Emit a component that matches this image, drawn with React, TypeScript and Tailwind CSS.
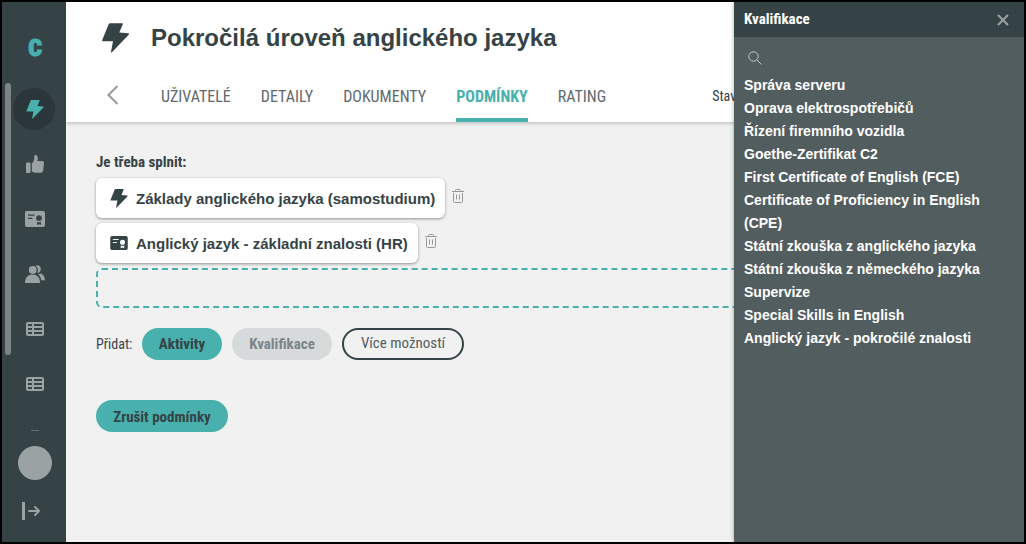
import type { ReactNode } from "react";

const condensed = "font-['Roboto_Condensed','Liberation_Sans_Narrow',Roboto,sans-serif]";

function BoltIcon({ className }: { className: string }) {
  return (
    <svg viewBox="0 0 81 89" className={className} fill="currentColor" aria-hidden="true">
      <path d="M25 0H60Q64 0 62 4L52 28L78 30Q83 31 80 35L30 87Q27 90 27 86L33 54H3Q-1 54 1 50L20 3Q21 0 25 0Z" />
    </svg>
  );
}

function ThumbIcon() {
  return (
    <svg viewBox="0 0 18 18" className="size-[18px]" fill="currentColor" aria-hidden="true">
      <path d="M1 7.500H3.500Q4.500 7.500 4.500 8.500V17Q4.500 18 3.500 18H1Q0 18 0 17V8.500Q0 7.500 1 7.500Z" />
      <path d="M5.800 8.500C7.500 7 8.300 5 8.300 3V1.200Q8.500 0 9.500 0C11 0 11.800 1.500 11.800 3.200C11.800 4.300 11.500 5.200 11.200 6H16.200Q18 6.200 18 8L17.200 15.500Q16.800 17.500 15 17.700H9.500Q7.500 17.500 5.800 16.500Z" />
    </svg>
  );
}

function CertificateIcon({ className }: { className: string }) {
  return (
    <svg viewBox="0 0 20 16" className={className} aria-hidden="true">
      <path
        fill="currentColor"
        fillRule="evenodd"
        d="M2 0H18A2 2 0 0 1 20 2V14A2 2 0 0 1 18 16H2A2 2 0 0 1 0 14V2A2 2 0 0 1 2 0ZM3 3.500V4.700H9.500V3.500ZM3 6.800V8H7.500V6.800ZM14 4.200A2.900 2.900 0 1 0 14 10A2.900 2.900 0 1 0 14 4.200ZM12 10.800V14L14 13.200L16 14V10.800Q14 11.800 12 10.800Z"
      />
    </svg>
  );
}

function UsersIcon() {
  return (
    <svg viewBox="0 0 20 18" className="h-[18px] w-5" fill="currentColor" aria-hidden="true">
      <circle cx="7.700" cy="4.900" r="3.900" />
      <path d="M0 18C0 12.500 3 9.600 7.500 9.600S15 12.500 15 18Z" />
      <path d="M10.500 .8C13 -.8 16 1 15.800 4.200C15.700 6.500 14.200 8 12.300 8.100C13.500 5.600 13 2.600 10.500 .8Z" />
      <path d="M13.200 9.300L15.800 8.500C18.500 9.500 19.800 12 20 15.200H16.200C15.800 12.700 14.800 10.700 13.200 9.300Z" />
    </svg>
  );
}

function TableIcon() {
  return (
    <svg viewBox="0 0 18 14" className="h-[14px] w-[18px]" aria-hidden="true">
      <path
        fill="currentColor"
        fillRule="evenodd"
        d="M2 0H16A2 2 0 0 1 18 2V12A2 2 0 0 1 16 14H2A2 2 0 0 1 0 12V2A2 2 0 0 1 2 0ZM2 2V4H6V2ZM8 2V4H16V2ZM2 6V8H6V6ZM8 6V8H16V6ZM2 10V12H6V10ZM8 10V12H16V10Z"
      />
    </svg>
  );
}

function TrashIcon() {
  return (
    <svg viewBox="0 0 12 14" className="h-[14px] w-3" fill="none" stroke="currentColor" aria-hidden="true">
      <path d="M0 2.500H12M3.500 2.500V1.500Q3.500 .5 4.500 .5H7.500Q8.500 .5 8.500 1.500V2.500M1.500 4V12.500Q1.500 13.500 2.500 13.500H9.500Q10.500 13.500 10.500 12.500V4M4.500 5.500V10.500M7.500 5.500V10.500" />
    </svg>
  );
}

function NavButton({ label, active, children }: { label: string; active?: boolean; children: ReactNode }) {
  return (
    <button
      type="button"
      aria-label={label}
      className={
        active
          ? "flex h-[42px] w-[42px] shrink-0 items-center justify-center rounded-full bg-[#2b363a] pl-px text-[#48b0ad]"
          : "flex h-[42px] w-[42px] shrink-0 items-center justify-center rounded-full pl-0.5 text-[#9ba2a4]"
      }
    >
      {children}
    </button>
  );
}

function Sidebar() {
  return (
    <aside className="flex w-16 shrink-0 flex-col bg-[#364346]">
      <a
        href="#"
        className="flex h-[81px] items-center justify-center pt-2.5 pl-0.5 font-['Roboto_Condensed',Roboto,sans-serif] text-2xl leading-6 font-black text-[#48b0ad] [-webkit-text-stroke:1px_#48b0ad]"
      >
        C
      </a>
      <div className="flex gap-0.5 pl-[3px]">
        <div className="h-[272px] w-1.5 rounded-full bg-[#7d8385]" />
        <nav className="flex h-[352px] flex-col gap-[13px] overflow-hidden pt-[5px]">
          <NavButton label="Aktivity" active>
            <BoltIcon className="h-[19px] w-[18px]" />
          </NavButton>
          <NavButton label="Hodnocení">
            <ThumbIcon />
          </NavButton>
          <NavButton label="Kvalifikace">
            <CertificateIcon className="h-4 w-5" />
          </NavButton>
          <NavButton label="Uživatelé">
            <UsersIcon />
          </NavButton>
          <NavButton label="Přehled">
            <TableIcon />
          </NavButton>
          <NavButton label="Tabulka">
            <TableIcon />
          </NavButton>
          <span className="mt-3 ml-[18px] h-px w-2 shrink-0 bg-[#66706f]" />
        </nav>
      </div>
      <div className="flex flex-col items-center gap-[22px] pt-[11px] pb-[21px] text-[#9ba2a4]">
        <button type="button" aria-label="Profil" className="ml-0.5 size-[34px] rounded-full bg-[#9ba2a4]" />
        <button type="button" aria-label="Odhlásit" className="mr-1.5">
          <svg viewBox="0 0 18 18" className="size-[18px]" fill="none" stroke="currentColor" aria-hidden="true">
            <path strokeWidth="3" d="M1.500 0V18" />
            <path strokeWidth="2" strokeLinecap="round" strokeLinejoin="round" d="M7 9H17M13 5L17 9L13 13" />
          </svg>
        </button>
      </div>
    </aside>
  );
}

const tabs = [
  { label: "UŽIVATELÉ" },
  { label: "DETAILY" },
  { label: "DOKUMENTY" },
  { label: "PODMÍNKY", active: true },
  { label: "RATING" },
];

function Header() {
  return (
    <header className="flex h-[120px] flex-col justify-between bg-white pl-9 shadow-[0_1px_4px_rgba(0,0,0,0.25)]">
      <div className="flex items-center gap-[22px] pt-5 text-[#364346]">
        <BoltIcon className="h-[30px] w-[27px]" />
        <h1 className="text-2xl leading-8 font-bold">Pokročilá úroveň anglického jazyka</h1>
      </div>
      <div className="flex h-[51px] items-stretch">
        <a href="#" aria-label="Zpět" className="flex w-[59px] pt-3.5 pl-[5px] text-[#999]">
          <svg viewBox="0 0 12 20" className="h-5 w-3" fill="none" stroke="currentColor" strokeWidth="2" aria-hidden="true">
            <path d="M10.500 1L1.500 10L10.500 19" />
          </svg>
        </a>
        <nav className={`flex gap-[30px] text-base leading-[51px] text-[#5f696d] ${condensed}`}>
          {tabs.map((tab) => (
            <a
              key={tab.label}
              href="#"
              className={tab.active ? "border-b-4 border-[#48b0ad] font-bold text-[#48b0ad]" : ""}
            >
              {tab.label}
            </a>
          ))}
        </nav>
        <span className={`ml-[106px] text-sm leading-[51px] text-[#364346] ${condensed}`}>Stav</span>
      </div>
    </header>
  );
}

function Condition({ icon, children }: { icon: ReactNode; children: ReactNode }) {
  return (
    <li className="flex">
      <div className="flex h-10 items-center gap-2 rounded-md bg-white pr-2.5 pl-3.5 text-[15px] leading-5 font-bold whitespace-nowrap shadow-[0_1px_3px_rgba(0,0,0,0.4)]">
        {icon}
        <span className="pt-0.5">{children}</span>
      </div>
      <button type="button" aria-label="Odstranit" className="mt-[11px] ml-[7px] self-start text-[#999]">
        <TrashIcon />
      </button>
    </li>
  );
}

const qualifications = [
  "Správa serveru",
  "Oprava elektrospotřebičů",
  "Řízení firemního vozidla",
  "Goethe-Zertifikat C2",
  "First Certificate of English (FCE)",
  "Certificate of Proficiency in English (CPE)",
  "Státní zkouška z anglického jazyka",
  "Státní zkouška z německého jazyka",
  "Supervize",
  "Special Skills in English",
  "Anglický jazyk - pokročilé znalosti",
];

function QualificationPanel() {
  return (
    <aside className="absolute inset-y-0 right-0 w-[290px] bg-[#525d60] text-white shadow-[0_0_4px_rgba(0,0,0,0.35)]">
      <div className="flex h-[35px] items-center justify-between bg-[#364346] pr-[15px] pl-2.5">
        <h2 className={`text-[15px] font-bold ${condensed}`}>Kvalifikace</h2>
        <button type="button" aria-label="Zavřít" className="text-[#9ba2a4]">
          <svg viewBox="0 0 12 12" className="size-3" stroke="currentColor" strokeWidth="2" aria-hidden="true">
            <path d="M1 1L11 11M11 1L1 11" />
          </svg>
        </button>
      </div>
      <label className="flex h-[37px] items-center gap-2 pt-1 pr-3 pl-3.5 text-[#c3c8ca]">
        <svg viewBox="0 0 14 14" className="size-3.5 shrink-0" fill="none" stroke="currentColor" aria-hidden="true">
          <circle cx="5.500" cy="5.500" r="4.700" />
          <path d="M9 9L13.500 13.500" />
        </svg>
        <input aria-label="Hledat" className="min-w-0 flex-1 bg-transparent text-sm outline-none" />
      </label>
      <ul className="px-2.5 text-sm leading-[23px] font-bold">
        {qualifications.map((name) => (
          <li key={name}>
            <button type="button" className="text-left">
              {name}
            </button>
          </li>
        ))}
      </ul>
    </aside>
  );
}

export default function App() {
  return (
    <div className="relative flex min-h-screen border-2 border-black bg-[#f1f1f1] font-['Liberation_Sans',Arial,sans-serif] text-[#364346]">
      <Sidebar />
      <div className="relative min-w-0 flex-1 overflow-hidden">
        <Header />
        <main className="px-[30px] pt-[30px]">
          <h2 className={`text-[15px] leading-5 font-bold ${condensed}`}>Je třeba splnit:</h2>
          <ul className="flex flex-col gap-[5px] pt-1.5">
            <Condition icon={<BoltIcon className="h-[19px] w-[18px]" />}>
              Základy anglického jazyka (samostudium)
            </Condition>
            <Condition icon={<CertificateIcon className="h-[14px] w-[18px]" />}>
              Anglický jazyk - základní znalosti (HR)
            </Condition>
            <li className="h-10 rounded-md border-2 border-dashed border-[#48b0ad]" />
          </ul>
          <div className={`flex items-center pt-5 text-sm ${condensed}`}>
            <span className="w-[46px] whitespace-nowrap">Přidat:</span>
            <button type="button" className="h-8 w-20 rounded-full bg-[#48b0ad] pt-0.5 text-[15px] font-bold">
              Aktivity
            </button>
            <button type="button" className="ml-2.5 h-8 w-[100px] rounded-full bg-[#d6dada] pt-0.5 text-[15px] font-bold text-[#7c8588]">
              Kvalifikace
            </button>
            <button type="button" className="ml-2.5 h-8 w-[122px] rounded-full border-2 border-[#364346] text-[15px] text-[#525d60]">
              Více možností
            </button>
          </div>
          <button type="button" className={`mt-10 h-8 w-[132px] rounded-full bg-[#48b0ad] pt-0.5 text-[15px] font-bold ${condensed}`}>
            Zrušit podmínky
          </button>
        </main>
        <QualificationPanel />
      </div>
    </div>
  );
}
